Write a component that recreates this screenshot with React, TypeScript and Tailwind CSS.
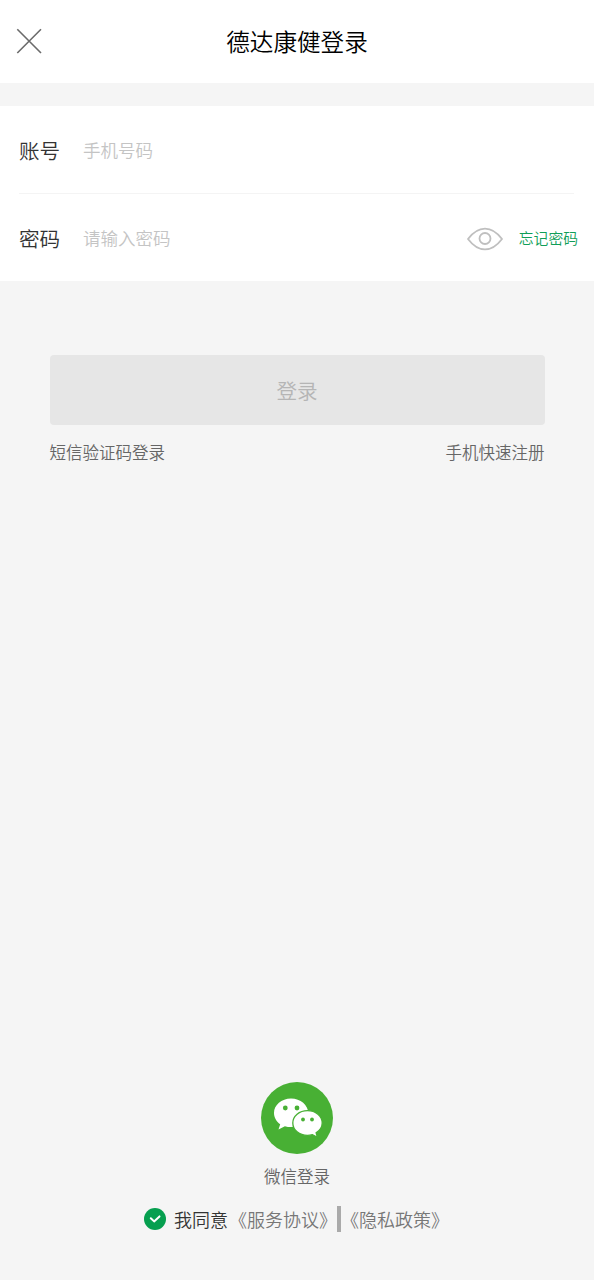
import React, { useState } from "react";

function CloseIcon() {
  return (
    <svg className="h-[26px] w-[26px]" viewBox="0 0 26 26" fill="none" stroke="#6b6b6b" strokeWidth="1.6">
      <path d="M1.3 1.2 25 25M25 1.2 1.3 25" />
    </svg>
  );
}

function EyeIcon() {
  return (
    <svg className="h-6 w-9" viewBox="0 0 36 24" fill="none" stroke="#bfbfbf" strokeWidth="1.8">
      <path
        d="M1 12C5.5 6 11 1.6 18 1.6S30.5 6 35 12C30.5 18 25 22.4 18 22.4S5.5 18 1 12Z"
        strokeLinejoin="round"
      />
      <circle cx="18" cy="11.5" r="5.5" />
    </svg>
  );
}

function WechatIcon() {
  return (
    <svg className="h-[72px] w-[72px]" viewBox="0 0 72 72">
      <circle cx="36" cy="36" r="36" fill="#48b034" />
      <path
        d="M30 16.5C20.5 16.5 13 23 13 31c0 4.6 2.4 8.5 6.200 11.200L17.500 47.400l6.400-3.200c2 .6 4 .9 6.100.9 9.600 0 17.200-6.200 17.200-14.100S39.600 16.500 30 16.500Z"
        fill="#fff"
      />
      <circle cx="24.3" cy="26" r="2.4" fill="#48b034" />
      <circle cx="36" cy="26" r="2.4" fill="#48b034" />
      <path
        d="M46.5 28.6c-8.200 0-14.700 5.500-14.700 12.400s6.500 12.400 14.700 12.400c1.700 0 3.400-.3 4.900-.7l5 2.600-1.300-4.400C58.700 48.600 61.200 45 61.200 41c0-6.900-6.500-12.400-14.700-12.400Z"
        fill="#fff"
        stroke="#48b034"
        strokeWidth="1.3"
      />
      <circle cx="42" cy="37.5" r="1.9" fill="#48b034" />
      <circle cx="51" cy="37.5" r="1.9" fill="#48b034" />
    </svg>
  );
}

function CheckIcon({ checked }: { checked: boolean }) {
  return (
    <svg className="h-[22px] w-[22px]" viewBox="0 0 22 22" fill="none">
      <circle cx="11" cy="11" r="11" fill={checked ? "#069f4f" : "#cccccc"} />
      <path d="m6.8 10.2 3.3 3.2 5.4-5" stroke="#fff" strokeWidth="2" strokeLinecap="round" strokeLinejoin="round" />
    </svg>
  );
}

export default function App() {
  const [account, setAccount] = useState("");
  const [password, setPassword] = useState("");
  const [visible, setVisible] = useState(false);
  const [agreed, setAgreed] = useState(true);

  return (
    <div className="flex h-[1280px] w-[594px] flex-col bg-[#f5f5f5] font-['Noto_Sans_CJK_SC',sans-serif] font-[350]">
      {/* Header */}
      <header className="grid h-[83px] grid-cols-[1fr_auto_1fr] items-center bg-white px-4 pb-0.5">
        <button aria-label="关闭" className="justify-self-start">
          <CloseIcon />
        </button>
        <h1 className="text-[23.6px] leading-9 font-[350] text-black">德达康健登录</h1>
      </header>

      {/* Account and password */}
      <div className="mt-[23px] h-[175px] bg-white">
        <div className="mr-5 ml-[19px] flex h-[88px] items-center border-b border-[#f4f4f4] pt-0.5">
          <label htmlFor="account" className="w-16 text-[20.6px] text-[#333333]">账号</label>
          <input
            id="account"
            value={account}
            onChange={(e) => setAccount(e.target.value)}
            placeholder="手机号码"
            className="min-w-0 flex-1 text-[17.5px] text-[#333333] outline-none placeholder:text-[#c4c4c4]"
          />
        </div>
        <div className="flex h-[87px] items-center pt-0.5 pr-4 pl-[19px]">
          <label htmlFor="password" className="w-16 text-[20.6px] text-[#333333]">密码</label>
          <input
            id="password"
            type={visible ? "text" : "password"}
            value={password}
            onChange={(e) => setPassword(e.target.value)}
            placeholder="请输入密码"
            className="min-w-0 flex-1 text-[17.5px] text-[#333333] outline-none placeholder:text-[#c4c4c4]"
          />
          <button aria-label="显示密码" onClick={() => setVisible(!visible)} className="mr-[15.5px]">
            <EyeIcon />
          </button>
          <button className="text-[14.8px] text-[#109e58]">忘记密码</button>
        </div>
      </div>

      {/* Login */}
      <div className="mt-[74px] px-[49.5px]">
        <button className="h-[70px] w-full rounded bg-[#e6e6e6] text-[20.6px] text-[#b5b5b5]">登录</button>
        <div className="mt-[15px] flex justify-between text-[16.5px] leading-6 text-[#666666]">
          <button>短信验证码登录</button>
          <button>手机快速注册</button>
        </div>
      </div>

      {/* Third-party login and agreement */}
      <div className="mt-auto flex flex-col items-center pb-12">
        <button className="flex flex-col items-center">
          <WechatIcon />
          <span className="mt-2.5 text-[16.5px] leading-6 text-[#666666]">微信登录</span>
        </button>
        <div className="mt-[18px] mr-px flex h-[26px] items-center text-[18px] text-[#777777]">
          <button aria-label="同意协议" onClick={() => setAgreed(!agreed)} className="mr-2">
            <CheckIcon checked={agreed} />
          </button>
          <span className="mr-px text-[#333333]">我同意</span>
          <a href="#service">《服务协议》</a>
          <span className="h-[26px] w-1 bg-[#aaaaaa]" />
          <a href="#privacy">《隐私政策》</a>
        </div>
      </div>
    </div>
  );
}
